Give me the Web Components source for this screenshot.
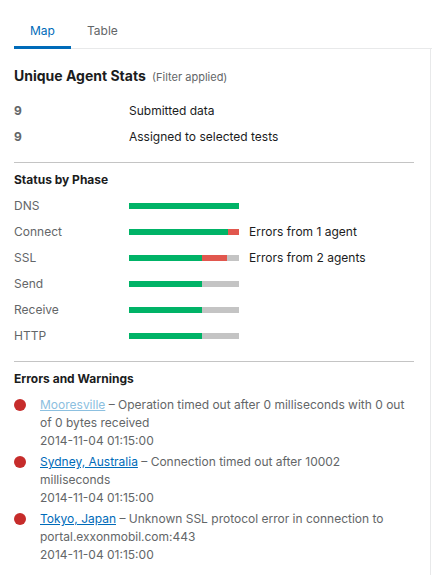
<!DOCTYPE html>
<html lang="en"><head><meta charset="utf-8"><title>Agent Stats</title>
<style>
body{margin:0;background:#fff;color:#1b1c1d;font:12px/18px Inter,"Liberation Sans",sans-serif}
</style></head><body>
<agent-page></agent-page>
<script>
const define=(name,html,init)=>customElements.define(name,class extends HTMLElement{
connectedCallback(){if(this.shadowRoot)return;this.attachShadow({mode:'open'}).innerHTML=html;if(init)init(this,this.shadowRoot)}});
define('tab-bar',`<style>:host{display:block;padding:14px 0 0 14px}nav{display:flex;border-bottom:1px solid #e8e9ea}
::slotted(button){font:inherit;line-height:18px;color:#636668;background:none;border:0;border-bottom:3px solid transparent;padding:8px 16px 6px;margin:0 0 -1px;cursor:pointer}
::slotted(button[aria-selected=true]){color:#006bb9;border-color:#006bb9}</style><nav role="tablist"><slot></slot></nav>`);
define('stat-row',`<style>:host{display:grid;grid-template-columns:115px 1fr;line-height:26px}b{font-weight:700;color:#636668}</style><b><slot name="value"></slot></b><span><slot></slot></span>`);
define('phase-row',`<style>:host{display:grid;grid-template-columns:115px 110px 1fr;align-items:center;line-height:26px}
.name{color:#636668}.bar{display:flex;height:6px;background:#c4c4c4}.ok{background:#00b367}.bad{background:#e1574e}.note{padding-left:10px}</style>
<span class="name"></span><div class="bar" role="img"><div class="ok"></div><div class="bad"></div></div><span class="note"><slot></slot></span>`,(h,r)=>{
r.querySelector('.name').textContent=h.getAttribute('name');
r.querySelector('.bar').setAttribute('aria-label',h.getAttribute('name')+' status');
r.querySelector('.ok').style.width=h.getAttribute('ok')+'%';r.querySelector('.bad').style.width=(h.getAttribute('bad')||0)+'%'});
define('error-item',`<style>:host{display:grid;grid-template-columns:26px 1fr;margin-bottom:3px;padding-right:8px;color:#636668}svg{margin-top:3px}p{margin:0}::slotted(a){color:#006bb9}::slotted(a.dim){color:#8cc0e0}</style>
<svg width="12" height="12" viewBox="0 0 12 12" aria-hidden="true"><circle cx="6" cy="6" r="6" fill="#c62c2b"/></svg><p><slot></slot></p>`);
define('agent-page',`<style>:host{display:block}main{margin-right:1px;border-right:1px solid #e8e9ea;padding:16px 16px 8px 14px}
h1{margin:0 0 10px;font-size:14px;line-height:22px;font-weight:700}h1 small{font-size:11px;font-weight:400;color:#636668;margin-left:3px}
h2{margin:0;font-size:12px;line-height:18px;font-weight:700}section+section{border-top:1px solid #c4c4c4;margin-top:12px;padding-top:8px}.phases{padding-top:4px}.errors{padding-top:8px}</style>
<tab-bar><button role="tab" aria-selected="true">Map</button><button role="tab" aria-selected="false">Table</button></tab-bar>
<main><section><h1>Unique Agent Stats <small>(Filter applied)</small></h1><stat-row><span slot="value">9</span>Submitted data</stat-row><stat-row><span slot="value">9</span>Assigned to selected tests</stat-row></section>
<section><h2>Status by Phase</h2><div class="phases"><phase-row name="DNS" ok="100"></phase-row><phase-row name="Connect" ok="90" bad="10">Errors from 1 agent</phase-row><phase-row name="SSL" ok="66" bad="23">Errors from 2 agents</phase-row><phase-row name="Send" ok="66"></phase-row><phase-row name="Receive" ok="66"></phase-row><phase-row name="HTTP" ok="66"></phase-row></div></section>
<section><h2>Errors and Warnings</h2><div class="errors"><error-item><a class="dim" href="#mooresville">Mooresville</a> – Operation timed out after 0 milliseconds with 0 out of 0 bytes received<br>2014-11-04 01:15:00</error-item><error-item><a href="#sydney">Sydney, Australia</a> – Connection timed out after 10002 milliseconds<br>2014-11-04 01:15:00</error-item><error-item><a href="#tokyo">Tokyo, Japan</a> – Unknown SSL protocol error in connection to portal.exxonmobil.com:443<br>2014-11-04 01:15:00</error-item></div></section></main>`);
</script></body></html>
